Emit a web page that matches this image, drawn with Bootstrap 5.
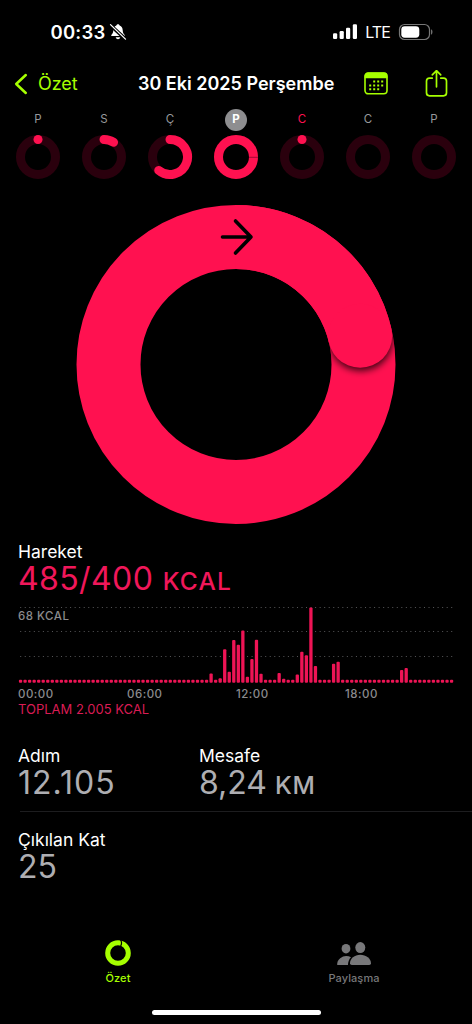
<!DOCTYPE html>
<html lang="tr">
<head>
    <meta charset="UTF-8">
    <meta name="viewport" content="width=device-width, initial-scale=1.0">
    <title>Özet</title>
    <!-- Bootstrap CSS -->
    <link href="https://cdn.jsdelivr.net/npm/bootstrap@5.3.0/dist/css/bootstrap.min.css" rel="stylesheet">
    <!-- Custom CSS -->
    <style>
        :root {
            --move: #ff1150;
            --lime: #a6ff00;
            --dim: #8b8b8e;
        }
        body {
            background-color: #000;
            color: #fff;
            font-family: Inter, "Liberation Sans", sans-serif;
        }
        svg {
            display: block;
            flex: none;
        }
        .screen {
            width: 472px;
            height: 1024px;
            overflow: hidden;
        }
        .status-bar {
            height: 64px;
            padding: 0 38px 0 50.5px;
        }
        .clock {
            font-size: 18.5px;
            font-weight: 600;
            letter-spacing: 0.2px;
            line-height: 20px;
        }
        .network {
            font-size: 16px;
            line-height: 20px;
            letter-spacing: -0.9px;
        }
        .top-nav {
            height: 39px;
            padding: 0 24px 0 14px;
        }
        .back-link {
            color: var(--lime);
            font-size: 18px;
            letter-spacing: -0.1px;
            width: 124px;
            gap: 10px;
        }
        .page-title {
            font-size: 18px;
            font-weight: 600;
            line-height: 24px;
        }
        .week {
            height: 87px;
            padding: 5px 5px 0;
        }
        .day {
            width: 66px;
        }
        .day-name {
            width: 22px;
            height: 22px;
            margin-top: 0.5px;
            margin-bottom: 4.5px;
            font-size: 11.5px;
            color: #98989b;
        }
        .day-name.selected {
            background-color: #8e8e90;
            color: #fff;
            font-weight: 700;
        }
        .day-name.today {
            color: var(--move);
        }
        .big-ring {
            height: 351px;
            padding-top: 13.5px;
        }
        .move-summary {
            padding-left: 18px;
        }
        .metric-label {
            font-size: 17.5px;
            line-height: 21px;
        }
        .metric-value {
            font-size: 32px;
            line-height: 33px;
            color: #aeaeb2;
            white-space: nowrap;
        }
        .metric-value .unit {
            font-size: 24.5px;
            font-weight: 500;
            letter-spacing: 0.7px;
        }
        .metric-value.steps {
            letter-spacing: 1px;
        }
        .metric-value.distance {
            word-spacing: -1px;
        }
        .metric-value.move-value {
            color: #f0175a;
            letter-spacing: 0.4px;
        }
        .metric-value.move-value .unit {
            letter-spacing: 1.2px;
        }
        .chart-area {
            height: 89px;
        }
        .chart-max {
            top: 10.5px;
            left: 0;
            font-size: 11.5px;
            font-weight: 500;
            line-height: 14px;
            letter-spacing: 0.5px;
            color: var(--dim);
        }
        .hours {
            height: 15px;
            font-size: 11.5px;
            font-weight: 500;
            line-height: 14px;
            letter-spacing: 0.5px;
            color: var(--dim);
        }
        .hours span {
            width: 109px;
        }
        .total {
            font-size: 13px;
            line-height: 14px;
            color: #d91c54;
        }
        .details {
            padding: 29px 0 0 18px;
        }
        .detail-row {
            height: 84px;
        }
        .detail-row + .detail-row {
            height: 110.4px;
        }
        .detail-row.with-line {
            background: linear-gradient(#1d1d1f, #1d1d1f) 2px 66px / 100% 1px no-repeat;
        }
        .detail-col {
            width: 181px;
        }
        .tab-item {
            width: 236px;
            font-size: 11px;
            font-weight: 500;
            line-height: 14px;
            letter-spacing: 0.1px;
            color: #78787a;
        }
        .tab-item.active {
            color: var(--lime);
        }
        .tab-item svg {
            margin-bottom: 4px;
        }
        .home-bar {
            width: 169px;
            height: 5px;
            margin-top: 24.6px;
        }
    </style>
</head>
<body>
    <div class="screen d-flex flex-column">
        <!-- Status bar -->
        <div class="status-bar d-flex align-items-center justify-content-between">
            <div class="d-flex align-items-center">
                <span class="clock">00:33</span>
                <svg class="ms-1" width="18" height="18" viewBox="0 0 18 18">
                    <path d="M9 1.2c.9 0 1.5.6 1.6 1.4 2 .7 3 2.4 3.1 4.6.1 2.5.7 3.5 2 4.7v1H2.300v-1c1.300-1.200 1.900-2.200 2-4.700.1-2.200 1.100-3.900 3.100-4.600.1-.8.700-1.400 1.600-1.400z" fill="#fff"/>
                    <path d="M6.700 14.200h4.600c-.3 1.300-1.200 2-2.300 2s-2-.7-2.300-2z" fill="#fff"/>
                    <path d="M1.500 2.300 16.200 15.900" stroke="#000" stroke-width="3.600"/>
                    <path d="M1.500 1.600 16.500 16.100" stroke="#fff" stroke-width="1.300" stroke-linecap="round"/>
                </svg>
            </div>
            <div class="d-flex align-items-center">
                <svg width="24" height="16" viewBox="0 0 24 16" fill="#fff">
                    <rect x="0" y="9.200" width="4.200" height="5.800" rx="1.200"/>
                    <rect x="6.600" y="7" width="4.200" height="8" rx="1.200"/>
                    <rect x="13" y="3.700" width="4.200" height="11.300" rx="1.200"/>
                    <rect x="19.800" y="0.300" width="4.200" height="14.700" rx="1.200"/>
                </svg>
                <span class="network ms-2">LTE</span>
                <svg class="ms-2" width="36" height="18" viewBox="0 0 36 18">
                    <rect x="1.500" y="1.500" width="30" height="15" rx="5" fill="none" stroke="#777" stroke-width="1.200"/>
                    <rect x="3.300" y="3.300" width="18" height="11.400" rx="3.400" fill="#fff"/>
                    <path d="M33.200 6.300c1.600.6 1.600 4.800 0 5.400z" fill="#888"/>
                </svg>
            </div>
        </div>

        <!-- Navigation -->
        <nav class="top-nav d-flex align-items-center">
            <div class="back-link d-flex align-items-center">
                <svg width="14" height="22" viewBox="0 0 14 22">
                    <path d="M11.800 2 2.200 11l9.600 9" fill="none" stroke="#a6ff00" stroke-width="2.500" stroke-linecap="round" stroke-linejoin="round"/>
                </svg>
                <span>Özet</span>
            </div>
            <div class="page-title">30 Eki 2025 Perşembe</div>
            <div class="d-flex align-items-center ms-auto">
                <svg width="24" height="23" viewBox="0 0 24 23">
                    <rect x="1" y="1" width="22" height="20.800" rx="3.300" fill="none" stroke="#a6ff00" stroke-width="1.600"/>
                    <path d="M.6 6.300V4Q.6.500 4 .5h16q3.400 0 3.400 3.500v2.300z" fill="#a6ff00"/>
                    <g fill="#a6ff00">
                        <path d="M9.200 8.600h2v2h-2zM13.200 8.600h2v2h-2zM17.200 8.600h2v2h-2z"/>
                        <path d="M5.200 12.400h2v2h-2zM9.200 12.400h2v2h-2zM13.200 12.400h2v2h-2zM17.200 12.400h2v2h-2z"/>
                        <path d="M5.200 16.200h2v2h-2zM9.200 16.200h2v2h-2zM13.200 16.200h2v2h-2z"/>
                    </g>
                </svg>
                <svg width="60" height="28" viewBox="-37 .7 60 28">
                    <g fill="none" stroke="#a6ff00" stroke-width="1.700" stroke-linecap="round" stroke-linejoin="round">
                        <path d="M7.300 8.800H4.500q-3 0-3 3v11.700q0 3 3 3h14q3 0 3-3V11.800q0-3-3-3h-2.800"/>
                        <path d="M11.500 17.500V1.600M7.300 5.500l4.200-4.200 4.200 4.200"/>
                    </g>
                </svg>
            </div>
        </nav>

        <!-- Week strip, rings are drawn by the script -->
        <div class="week d-flex" id="week"></div>

        <!-- Move ring -->
        <div class="big-ring d-flex justify-content-center">
            <svg width="322" height="322" viewBox="-161 -160.500 322 322">
                <defs>
                    <clipPath id="ringClip">
                        <path clip-rule="evenodd" d="M0-159.500A159.500 159.500 0 1 1 0 159.500 159.500 159.500 0 1 1 0-159.500zM0-95.500A95.500 95.500 0 1 0 0 95.500 95.500 95.500 0 1 0 0-95.500z"/>
                    </clipPath>
                    <filter id="soft" x="-30%" y="-30%" width="160%" height="160%">
                        <feGaussianBlur stdDeviation="3.500"/>
                    </filter>
                </defs>
                <circle r="127.500" fill="none" stroke="#ff1150" stroke-width="64"/>
                <g clip-path="url(#ringClip)">
                    <circle cx="124.800" cy="-25.500" r="32" fill="#000" fill-opacity=".75" filter="url(#soft)"/>
                </g>
                <path d="M0-127.500A127.500 127.500 0 0 1 124.200-28.700" fill="none" stroke="#ff1150" stroke-width="64"/>
                <circle cx="124.200" cy="-28.700" r="32" fill="#ff1150"/>
                <path d="M-13.500-127.500H15M-.5-143.500 15-127.500-.5-111.500" fill="none" stroke="#000" stroke-width="3.600" stroke-linecap="round" stroke-linejoin="round"/>
            </svg>
        </div>

        <!-- Move summary and chart -->
        <section class="move-summary">
            <div class="metric-label">Hareket</div>
            <div class="metric-value move-value">485/400 <span class="unit">KCAL</span></div>
            <div class="chart-area position-relative">
                <svg id="chart" width="440" height="88" viewBox="18 598 440 88"></svg>
                <span class="chart-max position-absolute">68 KCAL</span>
            </div>
            <div class="hours d-flex">
                <span>00:00</span>
                <span>06:00</span>
                <span>12:00</span>
                <span>18:00</span>
            </div>
            <div class="total">TOPLAM 2.005 KCAL</div>
        </section>

        <!-- Details -->
        <section class="details">
            <div class="detail-row with-line d-flex">
                <div class="detail-col">
                    <div class="metric-label">Adım</div>
                    <div class="metric-value steps">12.105</div>
                </div>
                <div class="detail-col">
                    <div class="metric-label">Mesafe</div>
                    <div class="metric-value distance">8,24 <span class="unit">KM</span></div>
                </div>
            </div>
            <div class="detail-row">
                <div class="metric-label">Çıkılan Kat</div>
                <div class="metric-value">25</div>
            </div>
        </section>

        <!-- Tab bar -->
        <div class="d-flex">
            <div class="tab-item active d-flex flex-column align-items-center">
                <svg width="28" height="28" viewBox="-14 -14 28 28">
                    <circle r="10.300" fill="none" stroke="#a6ff00" stroke-width="5"/>
                    <path d="M2.300-13.500Q4.600-10.300 2.700-7" fill="none" stroke="#000" stroke-width="1.200"/>
                </svg>
                <span>Özet</span>
            </div>
            <div class="tab-item d-flex flex-column align-items-center">
                <svg width="36" height="28" viewBox="0 0 36 28" fill="#78787a">
                    <ellipse cx="10" cy="9.700" rx="4.400" ry="4.800"/>
                    <path d="M1.200 26q-.4-4 3-6.800 2.700-2.200 6-2.200 2.600 0 4.800 1.200-3 3-3 7.800z"/>
                    <ellipse cx="24.300" cy="8.600" rx="5" ry="5.500"/>
                    <path d="M14 24.200c0-4.600 4.600-8.400 10.300-8.400s10.700 3.800 10.700 8.400q0 1.800-1.800 1.800H15.800Q14 26 14 24.200z"/>
                </svg>
                <span>Paylaşma</span>
            </div>
        </div>
        <div class="home-bar bg-white rounded-pill mx-auto"></div>
    </div>

    <!-- Bootstrap JS Bundle with Popper -->
    <script src="https://cdn.jsdelivr.net/npm/bootstrap@5.3.0/dist/js/bootstrap.bundle.min.js"></script>

    <!-- Custom JavaScript -->
    <script>
        // Days of the week: label, ring angle in degrees (-1 is an empty ring)
        const days = [
            { name: 'P', angle: 0.1 },
            { name: 'S', angle: 33 },
            { name: 'Ç', angle: 220 },
            { name: 'P', angle: 360, state: 'selected' },
            { name: 'C', angle: 0.1, state: 'today' },
            { name: 'C', angle: -1 },
            { name: 'P', angle: -1 }
        ];

        // Build the arc of a small ring
        function ringArc(angle) {
            if (angle < 0) return '';
            if (angle >= 360) {
                return `<circle r="17.5" fill="none" stroke="#ff1150" stroke-width="9"/>
                    <path d="M13 .3h9" stroke="#a00a35" stroke-width="1"/>`;
            }
            const rad = angle * Math.PI / 180;
            const x = (17.5 * Math.sin(rad)).toFixed(2);
            const y = (-17.5 * Math.cos(rad)).toFixed(2);
            const large = angle > 180 ? 1 : 0;
            return `<path d="M0-17.5A17.5 17.5 0 ${large} 1 ${x} ${y}" fill="none" stroke="#ff1150" stroke-width="9" stroke-linecap="round"/>`;
        }

        document.getElementById('week').innerHTML = days.map(day => `
            <div class="day d-flex flex-column align-items-center">
                <div class="day-name rounded-circle d-flex align-items-center justify-content-center ${day.state || ''}">${day.name}</div>
                <svg width="46" height="46" viewBox="-23 -22 46 46">
                    <circle r="17.5" fill="none" stroke="#2a000d" stroke-width="9"/>
                    ${ringArc(day.angle)}
                </svg>
            </div>`).join('');

        // Quarter-hour bars, anything not listed is a dot on the baseline
        const bars = {
            42: 9.3, 44: 4.5, 45: 33.5, 46: 11, 47: 42.7, 48: 38, 49: 52.3, 50: 6,
            51: 23.7, 52: 43, 53: 9, 57: 9.7, 58: 4, 61: 8.3, 62: 31, 63: 27.5, 64: 75.3,
            65: 16.7, 69: 19, 70: 21, 84: 12.7, 85: 14.7
        };
        const step = 4.537;
        let svg = '';
        [607, 631, 656].forEach(y => {
            for (let i = 0; i < 96; i++) {
                svg += `<rect x="${(20.2 + i * step).toFixed(2)}" y="${y}" width="1" height="1" fill="#58585a"/>`;
            }
        });
        for (let i = 0; i < 96; i++) {
            const h = bars[i] || 3;
            svg += `<rect x="${(18.9 + i * step).toFixed(2)}" y="${(682.8 - h).toFixed(2)}" width="3.3" height="${h}" rx="1" fill="#ee1455"/>`;
        }
        document.getElementById('chart').innerHTML = svg;
    </script>
</body>
</html>
